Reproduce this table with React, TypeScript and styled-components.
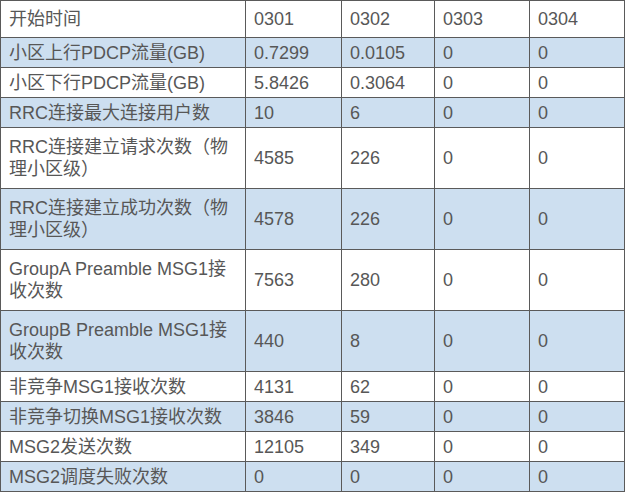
import styled, { createGlobalStyle } from "styled-components";

const GlobalStyle = createGlobalStyle`
  html, body {
    margin: 0;
    padding: 0;
    background: #ffffff;
  }
`;

// #region Style

const Table = styled.table`
  width: 624px;
  table-layout: fixed;
  border-collapse: collapse;
  font-family: "Liberation Sans", Arial, "Noto Sans CJK SC", sans-serif;
  font-size: 18px;
  color: #575757;
`;

const Row = styled.tr<{ $shaded: boolean; $height: number }>`
  height: ${(p) => p.$height}px;
  background-color: ${(p) => (p.$shaded ? "#cddff0" : "#ffffff")};
`;

const Cell = styled.td`
  border: 1px solid #5a5a5a;
  padding: 0 8px;
  line-height: 22px;
  vertical-align: middle;
  word-break: break-all;
`;

// #endregion

const columns = [245, 96, 93, 95, 95];

const header = ["开始时间", "0301", "0302", "0303", "0304"];

const rows: string[][] = [
  ["小区上行PDCP流量(GB)", "0.7299", "0.0105", "0", "0"],
  ["小区下行PDCP流量(GB)", "5.8426", "0.3064", "0", "0"],
  ["RRC连接最大连接用户数", "10", "6", "0", "0"],
  ["RRC连接建立请求次数（物理小区级）", "4585", "226", "0", "0"],
  ["RRC连接建立成功次数（物理小区级）", "4578", "226", "0", "0"],
  ["GroupA Preamble MSG1接收次数", "7563", "280", "0", "0"],
  ["GroupB Preamble MSG1接收次数", "440", "8", "0", "0"],
  ["非竞争MSG1接收次数", "4131", "62", "0", "0"],
  ["非竞争切换MSG1接收次数", "3846", "59", "0", "0"],
  ["MSG2发送次数", "12105", "349", "0", "0"],
  ["MSG2调度失败次数", "0", "0", "0", "0"],
];

const tall = [3, 4, 5, 6];

export default function App() {
  return (
    <>
      <GlobalStyle />
      <Table>
        <colgroup>
          {columns.map((w, i) => (
            <col key={i} style={{ width: w }} />
          ))}
        </colgroup>
        <tbody>
          <Row $shaded={false} $height={37}>
            {header.map((h) => (
              <Cell key={h}>{h}</Cell>
            ))}
          </Row>
          {rows.map((r, i) => (
            <Row key={r[0]} $shaded={i % 2 === 0} $height={tall.includes(i) ? 61 : 30}>
              {r.map((v, j) => (
                <Cell key={j}>{v}</Cell>
              ))}
            </Row>
          ))}
        </tbody>
      </Table>
    </>
  );
}
